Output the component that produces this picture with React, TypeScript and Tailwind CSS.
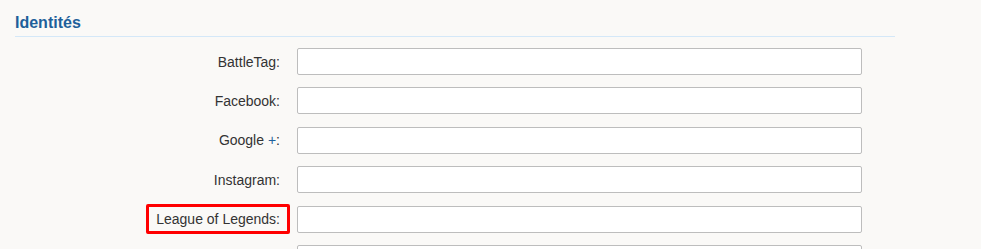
import React from 'react';

const fields = [
    { label: 'BattleTag' },
    { label: 'Facebook' },
    { label: 'Google +', plus: true },
    { label: 'Instagram' },
    { label: 'League of Legends', marked: true },
    { label: 'Twitch' },
];

function Row(props: any) {
    const { label, plus, marked } = props;
    return (
        <div className="flex items-center">
            <div className="w-[275px] flex justify-end">
                <span
                    className={
                        'inline-block border-[3px] rounded-[2px] px-[7px] leading-[24px] text-[14px] text-[#333] ' +
                        (marked ? 'border-[#ff0000]' : 'border-transparent')
                    }
                >
                    {plus ? (
                        <>
                            Google <span className="text-[#1e5f9a]">+</span>:
                        </>
                    ) : (
                        label + ':'
                    )}
                </span>
            </div>
            <input
                type="text"
                className="ml-[7px] w-[565px] h-[27px] bg-white border border-[#bdbdbd] rounded-[2px] outline-none"
            />
        </div>
    );
}

export default function App() {
    return (
        <div
            className="w-[981px] h-[249px] overflow-hidden bg-[#faf9f7] pl-[15px]"
            style={{ fontFamily: '"Liberation Sans", Arial, sans-serif' }}
        >
            <div className="w-[880px]">
                <h2 className="pt-[13px] pb-[3px] leading-[20px] text-[16px] font-bold text-[#1e5f9a] border-b border-[#d4e8f8]">
                    Identités
                </h2>
                <div className="mt-[9.5px] flex flex-col gap-[9.4px] -ml-[15px] pl-[15px]">
                    {fields.map((f) => (
                        <Row key={f.label} {...f} />
                    ))}
                </div>
            </div>
        </div>
    );
}
